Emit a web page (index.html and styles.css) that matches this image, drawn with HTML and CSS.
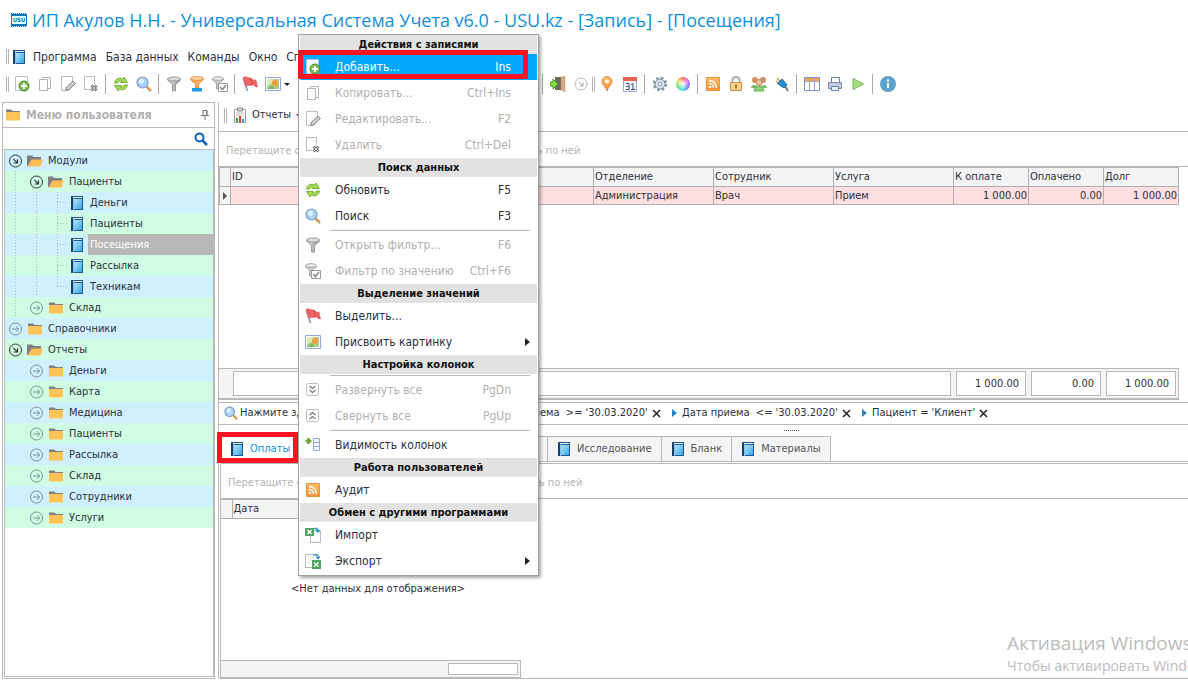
FILE: index.html
```html
<!DOCTYPE html>
<html lang="ru">
<head>
<meta charset="utf-8">
<title>Универсальная Система Учета</title>
<link rel="stylesheet" href="styles.css">
</head>
<body>
<svg class="defs" width="0" height="0" aria-hidden="true">
  <defs>
    <linearGradient id="gBook" x1="0" y1="0" x2="1" y2="1"><stop offset="0" stop-color="#b4e4fd"/><stop offset="1" stop-color="#3aa6e6"/></linearGradient>
    <linearGradient id="gGray" x1="0" y1="0" x2="1" y2="0"><stop offset="0" stop-color="#eee"/><stop offset=".5" stop-color="#bbb"/><stop offset="1" stop-color="#888"/></linearGradient>
    <linearGradient id="gOrange" x1="0" y1="0" x2="0" y2="1"><stop offset="0" stop-color="#ffbd6b"/><stop offset="1" stop-color="#f8912d"/></linearGradient>
  </defs>
  <symbol id="book" viewBox="0 0 14 16"><path d="M1 1h12v14H1z" fill="#1f5a8c"/><path d="M1 2h2v13H1z" fill="#1b3f66"/><path d="M4 4h8v10H4z" fill="url(#gBook)"/><path d="M3 2h9v1H3z" fill="#e4f2fa"/><path d="M3.500 3v12" stroke="#7fc0ea"/></symbol>
  <symbol id="folder" viewBox="0 0 16 16"><path d="M1 2.500h5l2 1.500h7v3H1z" fill="#7f7f7f"/><path d="M1 5h14v8.500H1z" fill="#ffc458"/></symbol>
  <symbol id="folder-open" viewBox="0 0 16 16"><path d="M0 2.500h5L6.500 4H14v3H5l-4 6H0z" fill="#7f7f7f"/><path d="M4.500 6.500H16l-2.500 7H1z" fill="#ffbe55"/></symbol>
  <symbol id="t-open" viewBox="0 0 14 14"><circle cx="7" cy="7" r="6" fill="none" stroke="#333"/><path d="M4.800 4.800l4 4M9 5.300V9H5.300" fill="none" stroke="#333" stroke-width="1.200"/></symbol>
  <symbol id="t-closed" viewBox="0 0 14 14"><circle cx="7" cy="7" r="6" fill="none" stroke="#7b9298"/><path d="M3.500 7h6.500M7.500 4.200L10.200 7 7.500 9.800" fill="none" stroke="#7b9298"/></symbol>
  <symbol id="add" viewBox="0 0 16 16"><path d="M1.500.500h12v14h-12z" fill="#fff" stroke="#b9bfd4"/><circle cx="10" cy="10" r="5" fill="#7fbb55" stroke="#4b8a30"/><path d="M10 7v6M7 10h6" stroke="#fff" stroke-width="1.800"/></symbol>
  <symbol id="copy" viewBox="0 0 16 16"><path d="M5.500 1.500h8v11h-8z" fill="#fff" stroke="#b4b4b4"/><path d="M2.500 3.500h8v11h-8z" fill="#fff" stroke="#b4b4b4"/></symbol>
  <symbol id="edit" viewBox="0 0 16 16"><path d="M1.500.500h11v10l-4 4h-7z" fill="#fff" stroke="#bbb"/><path d="M5.500 14.500l1-3.500 6.500-6 2.500 2.500L9 13.500z" fill="#ccc" stroke="#888"/></symbol>
  <symbol id="del" viewBox="0 0 16 16"><path d="M1.500.500h10v13h-10z" fill="#fff" stroke="#bbb"/><circle cx="11" cy="12" r="4" fill="#fff"/><path d="M8.500 9.500l5 5M13.500 9.500l-5 5" stroke="#777" stroke-width="2.800"/><path d="M9 10l4 4M13 10l-4 4" stroke="#ccc"/></symbol>
  <symbol id="refresh" viewBox="0 0 16 16"><path d="M1.500 7C2 3 6 1 9.500 3L11 1l3.500 5.500H7.500L8.500 5C6.500 4.500 5.500 5.500 4.500 7z" fill="#a4db4e" stroke="#5f9f2c" stroke-width=".8"/><path d="M14.500 9c-.500 4-4.500 6-8 4L5 15 1.500 9.500h7L7.500 11c2 .500 3 -.500 4-2z" fill="#a4db4e" stroke="#5f9f2c" stroke-width=".8"/></symbol>
  <symbol id="search" viewBox="0 0 16 16"><path d="M10.500 10.500l4.500 4.500" stroke="#d69a5b" stroke-width="2.500"/><circle cx="6.500" cy="6.500" r="5.500" fill="#a9d3f9" stroke="#7c9ccb" stroke-width="1.200"/><circle cx="5.500" cy="5.200" r="2.500" fill="#dff0ff"/></symbol>
  <symbol id="find" viewBox="0 0 14 14"><circle cx="5.500" cy="5.500" r="4" fill="none" stroke="#0a5fc4" stroke-width="2"/><path d="M8.500 8.500l4.500 4.500" stroke="#0a5fc4" stroke-width="2.500"/></symbol>
  <symbol id="funnel" viewBox="0 0 16 16"><path d="M1.500 3c0 3 5 4 5 6v6h3V9c0-2 5-3 5-6z" fill="url(#gGray)" stroke="#999"/><ellipse cx="8" cy="3" rx="6.500" ry="2" fill="#ddd" stroke="#999"/></symbol>
  <symbol id="funnel-o" viewBox="0 0 16 16"><path d="M1.500 2.500c0 3 5 4 5 6V12h3V8.500c0-2 5-3 5-6z" fill="#ffb45a" stroke="#e58a3a"/><ellipse cx="8" cy="2.500" rx="6.500" ry="1.800" fill="#ffe0ae" stroke="#e58a3a"/><path d="M3 12h10v3.500H3z" fill="#1d9de0"/></symbol>
  <symbol id="funnel-c" viewBox="0 0 16 16"><path d="M.5 3c0 2 4 3 4 5v5h2V8c0-2 5-3 5-5z" fill="#ccc" stroke="#a5a5a5"/><ellipse cx="6" cy="2.500" rx="5.500" ry="1.800" fill="#eee" stroke="#a5a5a5"/><path d="M6.500 7.500h9v8h-9z" fill="#fff" stroke="#999"/><path d="M8 11l2.500 2.500L14 9" fill="none" stroke="#888" stroke-width="1.500"/></symbol>
  <symbol id="flag" viewBox="0 0 16 16"><path d="M1.500 2.500L5.500 15" stroke="#8daecb" stroke-width="2"/><path d="M1 1.500c3-2 5 1 8 .500l2 2h3l1.500 7c-2 0-3-1-4-2-3 1-5 0-8 1z" fill="#f06464" stroke="#db4444" stroke-width=".5"/><path d="M9 2l1 6" stroke="#cc4646"/></symbol>
  <symbol id="picture" viewBox="0 0 16 14"><path d="M.5.500h15v13H.5z" fill="#fff" stroke="#8fa9de"/><path d="M2 2h12v10H2z" fill="#a9d08a"/><path d="M2 2h6v4L2 9z" fill="#ddecb2"/><circle cx="10" cy="6" r="3" fill="#f29d43"/><path d="M2 12l5-4 3 4z" fill="#7dba62"/></symbol>
  <symbol id="dn2" viewBox="0 0 16 16"><rect x="1.500" y="1.500" width="12" height="12" rx="2" fill="#fff" stroke="#bbb"/><path d="M4.500 4l3 2.500 3-2.500M4.500 8l3 2.500 3-2.500" fill="none" stroke="#777" stroke-width="1.200"/></symbol>
  <symbol id="up2" viewBox="0 0 16 16"><rect x="1.500" y="1.500" width="12" height="12" rx="2" fill="#fff" stroke="#bbb"/><path d="M4.500 7l3-2.500 3 2.500M4.500 11l3-2.500 3 2.500" fill="none" stroke="#777" stroke-width="1.200"/></symbol>
  <symbol id="cols" viewBox="0 0 16 16"><path d="M3.500 1v6M.500 4h6" stroke="#6ba43f" stroke-width="2.500"/><path d="M8.500 1.500h6v12h-6zM8.500 5.500h6M8.500 9.500h6" fill="#f4f6ff" stroke="#9aa8d0"/></symbol>
  <symbol id="rss" viewBox="0 0 14 14"><path d="M.5.500h13v13H.5z" fill="url(#gOrange)" stroke="#ef9436"/><circle cx="4" cy="10" r="1.300" fill="#fff"/><path d="M3 6.500A4.500 4.500 0 0 1 7.500 11M3 3.500A7.500 7.500 0 0 1 10.500 11" fill="none" stroke="#fff" stroke-width="1.400"/></symbol>
  <symbol id="import" viewBox="0 0 16 16"><path d="M5.500 3.500h10v12h-10z" fill="#fff" stroke="#bbb"/><path d="M0 1h9v8H0z" fill="#52a35f"/><path d="M2.500 3l4 4M6.500 3l-4 4" stroke="#fff" stroke-width="1.300"/><path d="M9 1.500c3-1 4 0 4 2m-2 0h4l-2 2z" fill="#2794cf" stroke="#2794cf"/></symbol>
  <symbol id="export" viewBox="0 0 16 16"><path d="M.5 1.500h13v13H.5z" fill="#fff" stroke="#bbb"/><path d="M3 4h6M3 7h4M3 10h3" stroke="#ddd"/><path d="M7 7h9v9H7z" fill="#52a35f"/><path d="M9 9.500l4.500 4M13.500 9.500l-4.500 4" stroke="#fff" stroke-width="1.300"/><path d="M8 2c3-1 4 0 5 1m-2 1h4l-2 2z" fill="#2794cf" stroke="#2794cf"/></symbol>
  <symbol id="report" viewBox="0 0 14 16"><path d="M1.500 2.500h11v13h-11z" fill="#fff" stroke="#999"/><path d="M4.500 1h5v3h-5z" fill="#ddd" stroke="#888"/><path d="M3 6h8M3 8h8" stroke="#bbb"/><path d="M4 11v4" stroke="#23a23b" stroke-width="2"/><path d="M7 9v6" stroke="#e3342c" stroke-width="2"/><path d="M10 12v3" stroke="#2790dd" stroke-width="2"/></symbol>
  <symbol id="pin" viewBox="0 0 8 10"><path d="M2 .5h4v5H2zM0 5.500h8M4 5.500V10M5.500 1v4" fill="none" stroke="#777"/></symbol>
  <symbol id="door" viewBox="0 0 16 16"><path d="M5 1h9v13H5z" fill="#6f6a65"/><path d="M11 1l4-.500v15l-4-1.500z" fill="#d5ab83" stroke="#b78b62" stroke-width=".5"/><path d="M0 6h3V3l5 5-5 5v-3H0z" fill="#8bdc44" stroke="#4a9a20"/></symbol>
  <symbol id="t-gray" viewBox="0 0 14 14"><circle cx="7" cy="7" r="6" fill="none" stroke="#bbb"/><path d="M5 5l4 4M9 5.500V9H5.500" fill="none" stroke="#aaa"/></symbol>
  <symbol id="marker" viewBox="0 0 14 16"><path d="M7 15C6 11 2 9 2 5.500a5 5 0 0 1 10 0C12 9 8 11 7 15z" fill="url(#gOrange)" stroke="#c98d4b"/><circle cx="7" cy="5.500" r="2" fill="#fff"/></symbol>
  <symbol id="cal" viewBox="0 0 16 16"><path d="M1.500 1.500h13v14h-13z" fill="#f3f5fc" stroke="#9aa8cf"/><path d="M1 1h14v4H1z" fill="#e9614f"/><path d="M4 7.500h3v6H4M4 10.500h3M9 8.500l2-1V14M9 13.500h4" fill="none" stroke="#3e4b70"/></symbol>
  <symbol id="gear" viewBox="0 0 16 16"><circle cx="8" cy="8" r="6" fill="none" stroke="#8793a9" stroke-width="2.500" stroke-dasharray="2.700 2.010"/><circle cx="8" cy="8" r="4.800" fill="#dfe5ef" stroke="#8793a9"/><circle cx="8" cy="8" r="2" fill="#fff" stroke="#8793a9"/></symbol>
  <symbol id="lock" viewBox="0 0 14 16"><path d="M3.500 8V4a3.500 3 0 0 1 7 0v4" fill="none" stroke="#aaa" stroke-width="2"/><path d="M1.500 6.500h11v8h-11z" fill="#ffd28b" stroke="#d48f3d"/><path d="M7 8.500v4" stroke="#805829" stroke-width="1.500"/></symbol>
  <symbol id="people" viewBox="0 0 16 16"><path d="M0 12c0-4 6-4 7 0zM9 12c1-4 7-4 7 0z" fill="#78bd63"/><circle cx="4" cy="4" r="3" fill="#cf9268"/><circle cx="12" cy="4" r="3" fill="#cf9268"/><circle cx="8" cy="6.500" r="3" fill="#f0c49d" stroke="#c08058"/><path d="M3 15c0-6 10-6 10 0z" fill="#8ed079" stroke="#6db05c"/></symbol>
  <symbol id="plug" viewBox="0 0 16 16"><path d="M3 2l3 3M2 5l3 2" stroke="#d4a23c" stroke-width="1.500"/><path d="M3.500 7.500L8 3l5 6-3 3z" fill="#268fd8" stroke="#16639f"/><path d="M11 10l3 5" stroke="#777" stroke-width="2"/></symbol>
  <symbol id="grid" viewBox="0 0 16 14"><path d="M.5.500h15v13H.5z" fill="#fff" stroke="#7893c9"/><path d="M1 1h14v3H1z" fill="#f8a34c"/><path d="M.5 4.500h15M5.500 1v12M10.500 1v12" stroke="#9aa6c7"/></symbol>
  <symbol id="printer" viewBox="0 0 16 16"><path d="M4.500 1.500h8v6h-8z" fill="#fff" stroke="#6f7f9c"/><path d="M1.500 6.500h13v6h-13z" fill="#c3cce0" stroke="#7b88a6"/><path d="M4.500 10.500h7v4h-7z" fill="#e8f3ff" stroke="#5e87bd"/></symbol>
  <symbol id="play" viewBox="0 0 14 14"><path d="M2 1.500L12.500 7 2 12.500z" fill="#a9da84" stroke="#7abb5c"/></symbol>
  <symbol id="info" viewBox="0 0 16 16"><circle cx="8" cy="8" r="8" fill="#5da2cf"/><path d="M8 7v5" stroke="#fff" stroke-width="2"/><circle cx="8" cy="4.500" r="1.200" fill="#fff"/></symbol>
  <symbol id="chip" viewBox="0 0 16 16"><path d="M0 1.500h16M0 14.500h16" stroke="#28699e" stroke-dasharray="1 1"/><path d="M0 2h16v12H0z" fill="#0874bd"/><path d="M1 4h14v8H1z" fill="#fff"/></symbol>
</svg>

<header class="titlebar">
  <span class="logo"><svg width="16" height="16"><use href="#chip"/></svg><span class="logo-text">USU</span></span>
  <h1 class="title">ИП Акулов Н.Н. - Универсальная Система Учета v6.0 - USU.kz - [Запись] - [Посещения]</h1>
</header>

<nav class="menubar" aria-label="Главное меню">
  <span class="grip"></span>
  <svg class="menubar-icon" width="14" height="16"><use href="#book"/></svg>
  <button class="menubar-item">Программа</button>
  <button class="menubar-item">База данных</button>
  <button class="menubar-item">Команды</button>
  <button class="menubar-item">Окно</button>
  <button class="menubar-item">Справка</button>
</nav>

<div class="toolbar" role="toolbar" aria-label="Инструменты">
  <span class="grip"></span>
  <div class="tools">
    <button class="tool" aria-label="Добавить"><svg><use href="#add"/></svg></button>
    <button class="tool" aria-label="Копировать"><svg><use href="#copy"/></svg></button>
    <button class="tool" aria-label="Редактировать"><svg><use href="#edit"/></svg></button>
    <button class="tool" aria-label="Удалить"><svg><use href="#del"/></svg></button>
    <span class="sep"></span>
    <button class="tool" aria-label="Обновить"><svg><use href="#refresh"/></svg></button>
    <button class="tool" aria-label="Поиск"><svg><use href="#search"/></svg></button>
    <span class="sep"></span>
    <button class="tool" aria-label="Фильтр"><svg><use href="#funnel"/></svg></button>
    <button class="tool" aria-label="Открыть фильтр"><svg><use href="#funnel-o"/></svg></button>
    <button class="tool" aria-label="Фильтр по значению"><svg><use href="#funnel-c"/></svg></button>
    <span class="sep"></span>
    <button class="tool" aria-label="Выделить"><svg><use href="#flag"/></svg></button>
    <button class="tool" aria-label="Картинка"><svg><use href="#picture"/></svg></button>
    <span class="caret"></span>
  </div>
  <div class="tools">
    <span class="sep"></span>
    <button class="tool" aria-label="Выход"><svg><use href="#door"/></svg></button>
    <button class="tool" aria-label="Закрыть окно"><svg class="small"><use href="#t-gray"/></svg></button>
    <span class="grip"></span>
    <button class="tool" aria-label="Карта"><svg><use href="#marker"/></svg></button>
    <button class="tool" aria-label="Календарь"><svg><use href="#cal"/></svg></button>
    <span class="sep"></span>
    <button class="tool" aria-label="Настройки"><svg><use href="#gear"/></svg></button>
    <button class="tool" aria-label="Цвет"><span class="wheel"></span></button>
    <span class="sep"></span>
    <button class="tool" aria-label="Аудит"><svg class="small"><use href="#rss"/></svg></button>
    <button class="tool" aria-label="Доступ"><svg><use href="#lock"/></svg></button>
    <button class="tool" aria-label="Пользователи"><svg><use href="#people"/></svg></button>
    <button class="tool" aria-label="Подключение"><svg><use href="#plug"/></svg></button>
    <span class="sep"></span>
    <button class="tool" aria-label="Таблица"><svg><use href="#grid"/></svg></button>
    <button class="tool" aria-label="Печать"><svg><use href="#printer"/></svg></button>
    <button class="tool" aria-label="Запуск"><svg class="small"><use href="#play"/></svg></button>
    <span class="sep"></span>
    <button class="tool" aria-label="Справка"><svg><use href="#info"/></svg></button>
  </div>
</div>

<div class="workspace">
  <aside class="sidebar">
    <div class="side-head">
      <svg width="16" height="16"><use href="#folder"/></svg>
      <h2 class="side-title">Меню пользователя</h2>
      <svg width="8" height="10"><use href="#pin"/></svg>
    </div>
    <div class="side-search">
      <input class="side-input" type="search" aria-label="Поиск по меню">
      <svg width="14" height="14"><use href="#find"/></svg>
    </div>
    <ul class="tree">
      <li class="node"><svg class="toggle"><use href="#t-open"/></svg><svg class="nicon"><use href="#folder-open"/></svg><span class="label">Модули</span></li>
      <li class="node"><i class="guide"></i><svg class="toggle"><use href="#t-open"/></svg><svg class="nicon"><use href="#folder-open"/></svg><span class="label">Пациенты</span></li>
      <li class="node"><i class="guide"></i><i class="guide"></i><i class="guide elbow"></i><svg class="nicon"><use href="#book"/></svg><span class="label">Деньги</span></li>
      <li class="node"><i class="guide"></i><i class="guide"></i><i class="guide elbow"></i><svg class="nicon"><use href="#book"/></svg><span class="label">Пациенты</span></li>
      <li class="node"><i class="guide"></i><i class="guide"></i><i class="guide elbow"></i><svg class="nicon"><use href="#book"/></svg><span class="label selected">Посещения</span></li>
      <li class="node"><i class="guide"></i><i class="guide"></i><i class="guide elbow"></i><svg class="nicon"><use href="#book"/></svg><span class="label">Рассылка</span></li>
      <li class="node"><i class="guide"></i><i class="guide"></i><i class="guide elbow last"></i><svg class="nicon"><use href="#book"/></svg><span class="label">Техникам</span></li>
      <li class="node"><i class="guide"></i><svg class="toggle"><use href="#t-closed"/></svg><svg class="nicon"><use href="#folder"/></svg><span class="label">Склад</span></li>
      <li class="node"><svg class="toggle"><use href="#t-closed"/></svg><svg class="nicon"><use href="#folder"/></svg><span class="label">Справочники</span></li>
      <li class="node"><svg class="toggle"><use href="#t-open"/></svg><svg class="nicon"><use href="#folder-open"/></svg><span class="label">Отчеты</span></li>
      <li class="node"><i class="blank"></i><svg class="toggle"><use href="#t-closed"/></svg><svg class="nicon"><use href="#folder"/></svg><span class="label">Деньги</span></li>
      <li class="node"><i class="blank"></i><svg class="toggle"><use href="#t-closed"/></svg><svg class="nicon"><use href="#folder"/></svg><span class="label">Карта</span></li>
      <li class="node"><i class="blank"></i><svg class="toggle"><use href="#t-closed"/></svg><svg class="nicon"><use href="#folder"/></svg><span class="label">Медицина</span></li>
      <li class="node"><i class="blank"></i><svg class="toggle"><use href="#t-closed"/></svg><svg class="nicon"><use href="#folder"/></svg><span class="label">Пациенты</span></li>
      <li class="node"><i class="blank"></i><svg class="toggle"><use href="#t-closed"/></svg><svg class="nicon"><use href="#folder"/></svg><span class="label">Рассылка</span></li>
      <li class="node"><i class="blank"></i><svg class="toggle"><use href="#t-closed"/></svg><svg class="nicon"><use href="#folder"/></svg><span class="label">Склад</span></li>
      <li class="node"><i class="blank"></i><svg class="toggle"><use href="#t-closed"/></svg><svg class="nicon"><use href="#folder"/></svg><span class="label">Сотрудники</span></li>
      <li class="node"><i class="blank"></i><svg class="toggle"><use href="#t-closed"/></svg><svg class="nicon"><use href="#folder"/></svg><span class="label">Услуги</span></li>
    </ul>
  </aside>

  <main class="content">
    <div class="reports">
      <span class="grip"></span>
      <button class="reports-btn"><svg width="14" height="16"><use href="#report"/></svg>Отчеты<span class="caret"></span></button>
    </div>

    <section class="panel upper">
      <p class="group-hint">Перетащите сюда заголовок колонки, чтобы сгруппировать по ней</p>
      <table class="grid">
        <colgroup><col class="c-mark"><col><col class="c-text"><col class="c-text"><col class="c-text"><col class="c-num"><col class="c-num"><col class="c-num"></colgroup>
        <thead><tr><th></th><th>ID</th><th>Отделение</th><th>Сотрудник</th><th>Услуга</th><th>К оплате</th><th>Оплачено</th><th>Долг</th></tr></thead>
        <tbody><tr><td class="mark"><span class="row-arrow"></span></td><td></td><td>Администрация</td><td>Врач</td><td>Прием</td><td class="num">1 000.00</td><td class="num">0.00</td><td class="num">1 000.00</td></tr></tbody>
      </table>
      <div class="totals">
        <output class="total wide"></output>
        <output class="total">1 000.00</output>
        <output class="total">0.00</output>
        <output class="total">1 000.00</output>
      </div>
    </section>

    <div class="filterbar">
      <button class="filter-prompt"><svg width="14" height="14"><use href="#search"/></svg>Нажмите здесь для изменения</button>
      <span class="cond"><i class="tri"></i>Дата приема&nbsp; &gt;= '30.03.2020'<button class="x" aria-label="Убрать условие"><svg width="9" height="9" viewBox="0 0 9 9"><path d="M1 1l7 7M8 1L1 8" stroke="#222" stroke-width="1.500"/></svg></button></span>
      <span class="cond"><i class="tri"></i>Дата приема&nbsp; &lt;= '30.03.2020'<button class="x" aria-label="Убрать условие"><svg width="9" height="9" viewBox="0 0 9 9"><path d="M1 1l7 7M8 1L1 8" stroke="#222" stroke-width="1.500"/></svg></button></span>
      <span class="cond"><i class="tri"></i>Пациент = 'Клиент'<button class="x" aria-label="Убрать условие"><svg width="9" height="9" viewBox="0 0 9 9"><path d="M1 1l7 7M8 1L1 8" stroke="#222" stroke-width="1.500"/></svg></button></span>
    </div>
    <div class="splitter"><span class="splitter-dots"></span></div>

    <div class="tabs" role="tablist">
      <button class="tab active" role="tab" aria-selected="true"><svg width="14" height="16"><use href="#book"/></svg>Оплаты</button>
      <span class="tab rest"></span>
      <button class="tab" role="tab"><svg width="14" height="16"><use href="#book"/></svg>Исследование</button>
      <button class="tab" role="tab"><svg width="14" height="16"><use href="#book"/></svg>Бланк</button>
      <button class="tab" role="tab"><svg width="14" height="16"><use href="#book"/></svg>Материалы</button>
    </div>
    <section class="panel lower">
      <p class="group-hint">Перетащите сюда заголовок колонки, чтобы сгруппировать по ней</p>
      <div class="subgrid">
        <table class="grid">
          <colgroup><col class="c-mark"><col></colgroup>
          <thead><tr><th></th><th>Дата</th></tr></thead>
        </table>
        <p class="empty">&lt;Нет данных для отображения&gt;</p>
        <div class="subtotals"><output class="total"></output></div>
      </div>
    </section>
  </main>
</div>

<div class="popup" role="menu">
  <h3 class="group">Действия с записями</h3>
  <button class="item hot" role="menuitem"><svg><use href="#add"/></svg><span class="text">Добавить...</span><kbd class="key">Ins</kbd></button>
  <button class="item" role="menuitem" disabled><svg><use href="#copy"/></svg><span class="text">Копировать...</span><kbd class="key">Ctrl+Ins</kbd></button>
  <button class="item" role="menuitem" disabled><svg><use href="#edit"/></svg><span class="text">Редактировать...</span><kbd class="key">F2</kbd></button>
  <button class="item" role="menuitem" disabled><svg><use href="#del"/></svg><span class="text">Удалить</span><kbd class="key">Ctrl+Del</kbd></button>
  <h3 class="group">Поиск данных</h3>
  <button class="item" role="menuitem"><svg><use href="#refresh"/></svg><span class="text">Обновить</span><kbd class="key">F5</kbd></button>
  <button class="item" role="menuitem"><svg><use href="#search"/></svg><span class="text">Поиск</span><kbd class="key">F3</kbd></button>
  <hr class="line">
  <button class="item" role="menuitem" disabled><svg><use href="#funnel"/></svg><span class="text">Открыть фильтр...</span><kbd class="key">F6</kbd></button>
  <button class="item" role="menuitem" disabled><svg><use href="#funnel-c"/></svg><span class="text">Фильтр по значению</span><kbd class="key">Ctrl+F6</kbd></button>
  <h3 class="group">Выделение значений</h3>
  <button class="item" role="menuitem"><svg><use href="#flag"/></svg><span class="text">Выделить...</span></button>
  <button class="item sub" role="menuitem"><svg><use href="#picture"/></svg><span class="text">Присвоить картинку</span><span class="sub-arrow"></span></button>
  <h3 class="group">Настройка колонок</h3>
  <hr class="line">
  <button class="item" role="menuitem" disabled><svg><use href="#dn2"/></svg><span class="text">Развернуть все</span><kbd class="key">PgDn</kbd></button>
  <button class="item" role="menuitem" disabled><svg><use href="#up2"/></svg><span class="text">Свернуть все</span><kbd class="key">PgUp</kbd></button>
  <hr class="line">
  <button class="item" role="menuitem"><svg><use href="#cols"/></svg><span class="text">Видимость колонок</span></button>
  <h3 class="group">Работа пользователей</h3>
  <button class="item" role="menuitem"><svg class="small"><use href="#rss"/></svg><span class="text">Аудит</span></button>
  <h3 class="group">Обмен с другими программами</h3>
  <button class="item" role="menuitem"><svg><use href="#import"/></svg><span class="text">Импорт</span></button>
  <button class="item sub" role="menuitem"><svg><use href="#export"/></svg><span class="text">Экспорт</span><span class="sub-arrow"></span></button>
</div>
<div class="highlight highlight-add"></div>
<div class="highlight highlight-tab"></div>

<div class="watermark">
  <p class="wm-title">Активация Windows</p>
  <p class="wm-text">Чтобы активировать Windows</p>
</div>
</body>
</html>
```

FILE: styles.css
```css
* { box-sizing: border-box; }
body {
  margin: 0;
  min-height: 100vh;
  display: flex;
  flex-direction: column;
  position: relative;
  overflow: hidden;
  background: #fff;
  color: #2b2f38;
  font: 11px/14px "DejaVu Sans Condensed", "DejaVu Sans", sans-serif;
}
h1, h2, h3, p, ul { margin: 0; padding: 0; font: inherit; }
button {
  font: inherit;
  color: inherit;
  background: none;
  border: 0;
  padding: 0;
  display: flex;
  align-items: center;
}
svg { flex: none; display: block; }
.defs { position: absolute; }

.titlebar { display: flex; align-items: center; gap: 5px; height: 40px; padding-left: 11px; }
.logo { display: grid; place-items: center; }
.logo > * { grid-area: 1 / 1; }
.logo-text { color: #0874bd; font: bold 6px/8px "DejaVu Sans Condensed", sans-serif; }
.title { color: #0f8fdc; font: 18px/26px "Open Sans", sans-serif; white-space: nowrap; }

.grip { flex: none; width: 3px; height: 15px; border: solid #b4b4b4; border-width: 0 1px; }
.menubar { display: flex; align-items: center; height: 33px; padding-left: 6px; }
.menubar-icon { margin: 0 7px 0 3px; }
.menubar-item { margin-right: 9px; font-size: 12px; }

.toolbar { display: flex; align-items: center; height: 22px; padding-left: 6px; }
.toolbar > .tools:last-child { margin-left: 249px; }
.tools { display: flex; align-items: center; margin-left: 1px; }
.tool { width: 23px; height: 22px; justify-content: center; }
.tool svg { width: 16px; height: 16px; }
.tool svg.small { width: 14px; height: 14px; }
.sep { width: 7px; height: 20px; background: linear-gradient(#aaa, #aaa) center / 1px 100% no-repeat; }
.caret { border: 3px solid transparent; border-top-color: #222; border-bottom: 0; }
.wheel {
  width: 14px; height: 14px; border-radius: 50%;
  background: radial-gradient(#fff, transparent 70%), conic-gradient(#ff5454, #e254ee, #5a6cf2, #42d6ec, #4be06a, #e2e64a, #ff5454);
}

.workspace { flex: 1; display: flex; gap: 3px; padding: 7px 0 1px 2px; }
.sidebar { flex: none; width: 213px; border: 1px solid #b8b8b8; display: flex; flex-direction: column; }
.side-head { display: flex; align-items: center; gap: 5px; height: 24px; padding: 0 5px 0 2px; }
.side-title { flex: 1; font-size: 12px; font-weight: bold; color: #b0b0b0; }
.side-search { display: flex; align-items: center; height: 22px; padding-right: 6px; border-top: 1px solid #b8b8b8; }
.side-input { flex: 1; min-width: 0; height: 18px; border: 0; outline: 0; background: none; font: inherit; }
.tree { list-style: none; flex: 1; border: 1px solid #b8b8b8; margin: 0 0 1px 1px; }
.node { display: flex; align-items: center; height: 21px; background: #cff0ff; }
.node:nth-child(even) { background: #cffde3; }
.toggle { width: 21px; height: 14px; }
.nicon { width: 16px; height: 16px; margin: 0 3px 0 1px; }
.label { flex: 1; align-self: stretch; padding-left: 2px; line-height: 21px; }
.selected { background: #b8b8b8; color: #fff; }
.guide, .blank { width: 21px; height: 21px; flex: none; }
.guide { background: repeating-linear-gradient(#a9b4b8 0 1px, transparent 1px 3px) 10px 0 / 1px 21px no-repeat; }
.guide.elbow { background: repeating-linear-gradient(#a9b4b8 0 1px, transparent 1px 3px) 10px 0 / 1px 21px no-repeat, repeating-linear-gradient(90deg, #a9b4b8 0 1px, transparent 1px 3px) 10px 10px / 11px 1px no-repeat; }
.guide.last { background-size: 1px 11px, 11px 1px; }

.content { flex: 1; min-width: 0; display: flex; flex-direction: column; border-left: 1px solid #b8b8b8; }
.reports { display: flex; align-items: center; height: 26px; padding-left: 5px; margin-bottom: 3px; }
.reports-btn { gap: 5px; margin-left: 6px; }
.panel { display: flex; flex-direction: column; }
.upper { flex: 162 0 auto; border-top: 1px solid #b8b8b8; }
.group-hint { height: 35px; padding: 0 7px; line-height: 37px; color: #b4b4b4; border-bottom: 1px solid #b8b8b8; }
.upper .grid { width: calc(100% - 9px); }
.grid { width: 100%; border-collapse: collapse; table-layout: fixed; }
.grid th, .grid td { height: 18px; padding: 0 1px; border: 1px solid #b0b0b0; line-height: 16px; font-weight: normal; text-align: left; }
.grid th { height: 19px; background: #f4f4f4; }
.grid td { background: #ffdfe2; }
.grid td.mark { background: #f4f4f4; padding: 0 3px; }
.grid td.num { text-align: right; }
.c-mark { width: 11px; }
.c-text { width: 120px; }
.c-num { width: 75px; }
.row-arrow, .tri { display: block; width: 0; border: 4px solid transparent; border-left-color: #555; border-right: 0; }
.totals { display: flex; gap: 5px; margin: auto 9px 0 0; padding: 2px; padding-left: 14px; background: #f4f4f4; border: solid #b8b8b8; border-width: 1px 1px 2px 0; }
.total { width: 70px; height: 25px; padding: 0 6px; line-height: 24px; text-align: right; background: #fff; border: 1px solid #b8b8b8; }
.total.wide { flex: 1; }

.filterbar { display: flex; align-items: center; height: 23px; margin-top: 2px; padding-left: 5px; border: 1px solid #b8b8b8; border-width: 1px 0; white-space: nowrap; }
.filter-prompt { width: 256px; gap: 2px; }
.cond { display: flex; align-items: center; width: 190px; }
.tri { border-left-color: #2186c4; margin: 0 5px 0 2px; border-left-width: 5px; }
.x { margin-left: 4px; }
.splitter { height: 11px; display: flex; justify-content: center; align-items: center; padding-left: 176px; }
.splitter-dots { width: 15px; border-top: 1px dotted #555; }

.tabs { display: flex; height: 26px; padding-left: 2px; border-bottom: 1px solid #b8b8b8; }
.tab { gap: 6px; padding: 0 9px; background: #f4f4f4; border: solid #b8b8b8; border-width: 1px 1px 0 0; color: #555; }
.tab.active { width: 80px; background: #fff; color: #0f8fdc; border-top: 1px solid #29a2ea; }
.tab.rest { width: 247px; }
.lower { flex: 127 0 auto; margin: 1px 0 0 1px; border: solid #b8b8b8; border-width: 1px 0 1px 1px; }
.subgrid { flex: 1; display: flex; flex-direction: column; width: 300px; }
.subgrid .grid th:first-child { border-left: 0; }
.empty { flex: 1; display: grid; place-items: center; padding-left: 14px; }
.subtotals { display: flex; justify-content: flex-end; padding: 2px; background: #f4f4f4; border: solid #b8b8b8; border-width: 1px 1px 1px 0; }
.subtotals .total { height: 12px; }

.popup { position: absolute; left: 298px; top: 34px; width: 241px; padding: 0 1px 1px; background: #fff; border: 1px solid #a0a0a0; box-shadow: 2px 2px 3px #0005; }
.group { height: 19px; line-height: 20px; font-weight: bold; text-align: center; color: #111; background: #e2e2e2; }
.item { width: 100%; height: 26px; padding: 0 26px 0 5px; text-align: left; }
.item svg { width: 16px; height: 16px; margin-right: 14px; }
.item svg.small { width: 14px; height: 14px; margin: 0 15px 0 1px; }
.item .text { flex: 1; font-size: 12px; }
.key { font: inherit; font-size: 12px; }
.item:disabled { color: #b0b0b0; }
.item.hot { background: #03a9ff; color: #fff; }
.item.sub { padding-right: 7px; }
.sub-arrow { border: 4px solid transparent; border-left: 5px solid #222; border-right: 0; }
.line { margin: 1px 7px 1px 30px; border: 0; border-top: 1px solid #b8b8b8; }

.highlight { position: absolute; border: 5px solid #fd1420; pointer-events: none; }
.highlight-add { left: 298px; top: 50px; width: 230px; height: 29px; }
.highlight-tab { left: 217px; top: 432px; width: 81px; height: 31px; }

.watermark { position: absolute; left: 1007px; bottom: 4px; color: #bcbcbc; white-space: nowrap; font-family: "Open Sans", sans-serif; }
.wm-title { font-size: 19px; line-height: 26px; }
.wm-text { font-size: 14px; line-height: 20px; }
```
